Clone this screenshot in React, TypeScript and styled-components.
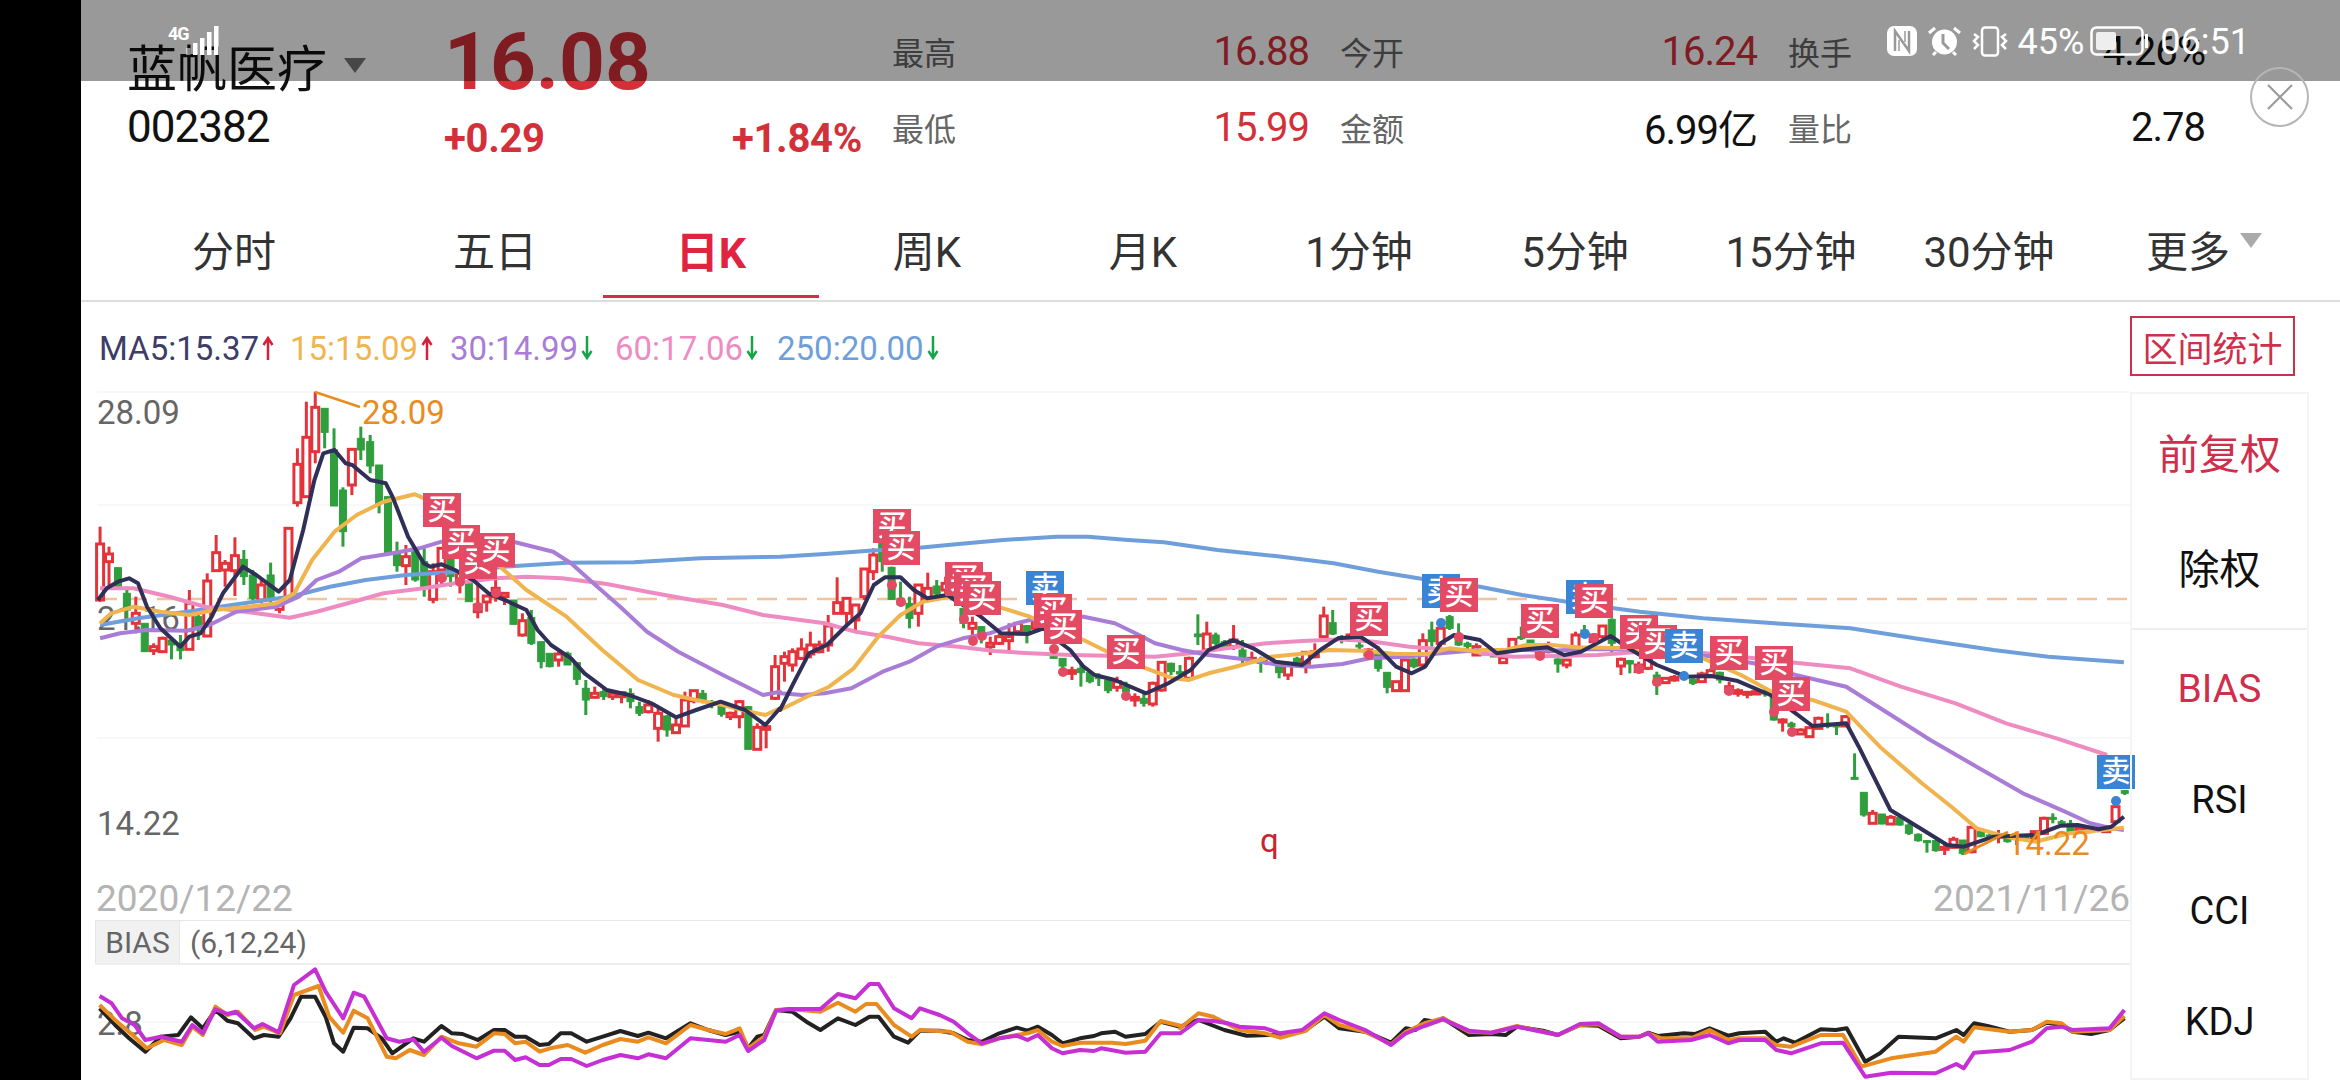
import React from "react";
import styled, { createGlobalStyle } from "styled-components";

const GlobalStyle = createGlobalStyle`
  html, body {
    margin: 0;
    padding: 0;
    background: #000;
  }
  * {
    box-sizing: border-box;
  }
`;

const FONT = `Roboto, "Noto Sans CJK SC", sans-serif`;
const RED = "#d3303a";
const BRAND = "#cf2f4b";
const BUY = "#e34b64";
const SELL = "#3a84d6";

// The chart data was read off three crops of the picture, so every trace is
// kept in crop units and mapped to page pixels here.
type Crop = { ox: number; oy: number; sx: number };
const LEFT: Crop = { ox: 80, oy: 380, sx: 2.24 };
const MID: Crop = { ox: 780, oy: 480, sx: 2.24 };
const RIGHT: Crop = { ox: 1480, oy: 560, sx: 2.376 };
const SUB_L: Crop = { ox: 80, oy: 860, sx: 1.425 };
const SUB_R: Crop = { ox: 1180, oy: 860, sx: 1.35 };

const mapX = (c: Crop, x: number) => c.ox + x / c.sx;
const mapY = (c: Crop, y: number) => c.oy + y / 3;

const trace = (...parts: [Crop, string][]) =>
  parts
    .map(([c, raw]) =>
      raw
        .trim()
        .split(/\s+/)
        .map((p) => {
          const [x, y] = p.split(",").map(Number);
          return `${mapX(c, x).toFixed(1)},${mapY(c, y).toFixed(1)}`;
        })
        .join(" ")
    )
    .join(" ");

const MA_LINES = [
  {
    color: "#6e9fdb",
    points: trace(
      [LEFT, "45,735 130,715 240,695 340,675 470,650 560,620 640,600 730,585 850,575 950,560 1090,548 1240,547 1390,535 1568,530"],
      [MID, "0,230 100,222 200,212 300,205 400,192 500,180 620,170 690,170 780,180 860,187 980,210 1110,228 1240,250 1340,275 1440,297 1568,320"],
      [RIGHT, "0,80 100,105 230,130 380,155 530,175 700,190 880,205 1060,240 1220,270 1350,290 1530,307"]
    ),
  },
  {
    color: "#ee8cc2",
    points: trace(
      [LEFT, "45,625 120,625 200,650 280,680 370,695 470,713 530,695 600,670 680,640 770,625 840,610 930,595 1000,590 1080,595 1180,612 1270,635 1350,655 1440,675 1530,705 1568,712"],
      [MID, "0,412 100,430 170,455 240,470 310,490 400,500 480,513 560,520 650,525 760,528 840,530 920,520 1000,505 1090,490 1170,483 1260,478 1330,485 1410,500 1500,510 1568,515"],
      [RIGHT, "0,280 80,290 180,288 280,285 380,275 500,275 620,290 760,310 880,325 1000,380 1130,430 1250,490 1370,535 1490,585"]
    ),
  },
  {
    color: "#a97dd6",
    points: trace(
      [LEFT, "45,775 90,760 150,750 240,752 290,735 350,695 440,680 490,650 530,600 580,575 630,535 700,520 760,505 810,485 975,487 1060,515 1100,550 1150,610 1210,680 1270,755 1340,815 1440,885 1530,945 1568,935"],
      [MID, "0,640 50,645 100,640 160,625 230,575 290,545 350,500 410,475 470,460 530,430 590,410 680,410 750,430 800,462 840,490 900,510 960,525 1040,538 1120,555 1190,560 1260,552 1320,535 1400,530 1480,520 1568,510"],
      [RIGHT, "0,270 100,270 170,272 240,268 340,268 450,280 560,290 650,310 750,345 870,380 970,460 1070,540 1180,620 1290,700 1390,755 1450,790 1500,805 1530,810"]
    ),
  },
  {
    color: "#f0b44e",
    points: trace(
      [LEFT, "45,730 70,700 120,680 180,695 245,705 300,690 380,680 440,670 480,640 520,540 570,455 620,405 680,365 750,343 780,360 860,460 945,565 1000,630 1090,710 1170,810 1250,900 1330,945 1380,960 1440,975 1500,995 1535,1005 1568,985"],
      [MID, "0,690 60,650 110,620 165,565 220,470 270,405 320,365 380,350 440,360 500,385 560,410 620,450 680,480 740,520 820,565 880,595 915,600 960,580 1020,560 1100,530 1180,520 1230,510 1300,512 1380,522 1450,522 1500,505 1568,515"],
      [RIGHT, "0,270 60,270 110,255 170,255 230,262 350,265 430,280 530,295 620,345 700,400 790,420 870,455 950,560 1050,670 1120,740 1180,805 1250,830 1320,845 1400,820 1480,810 1530,803"]
    ),
  },
  {
    color: "#2f2f57",
    points: trace(
      [LEFT, "40,660 60,625 85,605 110,595 130,610 150,680 180,745 225,800 245,770 270,760 295,710 320,640 365,560 395,585 445,635 470,600 500,450 525,300 545,220 570,210 595,250 610,255 650,300 685,310 700,350 735,470 770,550 785,560 810,553 840,570 880,600 915,640 960,665 1000,690 1025,750 1055,795 1100,835 1130,880 1180,930 1230,945 1280,970 1335,1012 1380,990 1435,965 1490,990 1535,1035 1568,985"],
      [MID, "0,690 30,610 65,520 105,495 150,435 180,400 210,315 235,292 270,292 300,330 330,355 375,345 410,375 450,410 495,460 555,462 590,445 620,480 650,510 680,560 705,585 750,600 820,640 870,610 920,570 960,510 1015,480 1060,505 1110,545 1170,555 1210,510 1250,475 1300,470 1340,505 1380,560 1415,580 1445,560 1480,490 1510,465 1568,480"],
      [RIGHT, "0,240 40,280 110,268 160,262 200,285 240,275 310,228 360,270 420,315 490,350 550,348 610,362 690,405 750,460 790,498 870,490 900,560 975,750 1040,800 1110,855 1150,860 1220,830 1320,825 1380,797 1420,795 1470,808 1500,800 1530,770"]
    ),
  },
];

const BIAS_LINES = [
  {
    color: "#222222",
    points: trace(
      [SUB_L, "28,445 50,495 70,535 93,575 115,530 140,525 158,472 175,505 193,450 210,482 225,490 248,535 262,525 283,530 300,475 315,410 335,410 350,470 362,550 375,575 390,503 410,505 430,535 445,580 475,535 490,545 515,498 530,520 545,522 567,540 590,510 605,510 620,530 635,530 655,555 668,552 685,520 700,520 722,545 745,530 770,513 795,528 810,518 835,535 870,490 895,510 920,525 940,515 952,565 965,530 975,525 992,450 1015,455 1035,485 1055,510 1080,475 1105,495 1125,470 1138,470 1160,530 1180,548 1197,512 1225,512 1245,520 1265,540 1285,545 1310,520 1335,503 1350,512 1365,500 1385,525 1400,550 1425,535 1445,528 1455,520 1475,515 1490,530 1518,522 1540,485 1568,500"],
      [SUB_R, "0,500 25,480 60,510 90,527 120,525 135,525 170,510 195,470 215,505 250,515 285,548 305,505 318,510 330,480 345,485 355,475 390,525 420,522 440,525 455,500 490,512 510,525 540,495 565,497 595,535 620,530 632,518 645,528 680,520 695,522 715,505 740,527 755,520 790,515 805,545 815,535 830,548 865,508 885,510 900,505 925,605 945,580 970,530 1020,535 1048,510 1058,525 1072,490 1090,498 1120,515 1150,510 1170,488 1190,495 1205,515 1230,522 1255,510 1275,475"]
    ),
  },
  {
    color: "#e98b1f",
    points: trace(
      [SUB_L, "28,435 50,480 75,525 95,565 120,540 145,555 160,500 175,525 193,440 210,465 225,455 250,510 262,500 285,520 305,405 340,378 355,470 375,518 390,452 410,475 437,590 450,595 470,570 490,585 515,530 540,550 565,560 590,520 605,522 620,550 635,545 655,575 670,565 695,555 720,578 745,555 770,537 795,545 810,532 835,550 870,495 895,510 920,522 940,505 952,565 975,530 992,450 1010,447 1055,455 1080,428 1105,455 1120,432 1135,432 1160,495 1185,530 1197,510 1240,515 1265,545 1285,553 1310,535 1335,525 1350,520 1365,510 1385,545 1400,558 1425,548 1470,548 1490,552 1518,542 1540,483 1568,497"],
      [SUB_R, "0,505 25,460 45,470 80,510 115,520 135,533 170,512 195,465 215,495 250,515 285,553 305,515 330,490 355,475 390,515 420,518 455,498 510,525 540,495 565,493 595,530 620,530 632,520 650,535 690,535 715,510 740,540 755,535 790,535 805,555 825,560 865,525 895,525 920,620 960,595 1020,575 1048,530 1058,545 1072,502 1120,515 1150,510 1170,485 1190,490 1205,515 1255,510 1275,468"]
    ),
  },
  {
    color: "#c52fd3",
    points: trace(
      [SUB_L, "28,408 45,430 60,475 78,495 93,540 115,530 145,545 160,495 175,520 193,448 210,462 222,455 248,505 260,492 283,517 305,375 335,328 350,395 375,475 390,398 405,410 437,535 455,545 475,538 490,575 515,533 530,558 565,595 590,572 605,572 620,600 635,592 655,615 668,615 685,597 700,597 722,618 745,600 770,585 795,595 810,583 835,595 870,535 895,540 920,545 940,525 952,573 975,540 992,452 1010,447 1055,447 1080,402 1105,415 1125,372 1138,372 1160,445 1185,475 1197,445 1225,465 1245,485 1265,520 1285,550 1310,535 1335,527 1350,540 1365,525 1385,565 1400,580 1425,570 1445,573 1455,565 1475,572 1490,578 1518,575 1540,520 1568,520"],
      [SUB_R, "0,520 25,480 45,483 65,490 80,500 115,505 135,520 165,510 195,460 215,480 250,510 285,555 305,520 330,498 355,478 390,512 420,518 455,500 510,525 540,492 565,490 595,530 620,530 632,520 645,545 690,540 715,525 740,550 755,540 790,540 805,570 825,580 865,550 895,548 925,650 960,638 1020,640 1048,612 1058,625 1072,578 1120,570 1150,545 1170,505 1190,500 1205,510 1255,505 1275,450"]
    ),
  },
];

// x, high, body top, body bottom, low, r/g
const CANDLES_LEFT = `
45 440 492 660 665 r|65 500 522 545 620 r|85 563 563 620 620 g|105 620 640 690 720 g|125 650 700 730 760 r|145 730 730 815 815 g
165 790 800 812 825 r|185 770 775 815 815 r|205 780 780 795 838 g|225 765 795 812 838 g|245 630 670 808 808 r|265 700 710 745 780 g
285 580 603 768 768 r|305 465 518 572 575 r|325 540 550 570 620 r|347 472 527 572 648 r|367 510 538 590 615 g|387 570 585 655 660 g
406 600 615 660 670 r|427 548 585 660 670 g|447 650 672 688 700 r|467 445 445 650 650 r|487 205 253 368 380 r|507 65 172 350 350 r
527 35 82 215 250 r|548 85 85 157 205 g|569 145 210 378 378 g|589 322 330 455 500 g|609 205 208 315 345 r|629 140 175 210 240 g
650 165 185 258 280 g|670 255 255 370 400 g|690 350 350 520 520 g|710 485 520 557 575 g|730 495 530 557 615 r|751 510 510 600 605 g
771 505 545 622 650 g|791 550 575 658 670 r|810 505 505 570 620 r|830 530 530 590 620 g|851 580 580 600 640 r|871 610 610 665 665 g
891 615 675 695 715 r|911 645 648 666 695 r|931 590 625 650 665 r|951 640 640 650 675 r|971 660 660 733 733 g|991 700 722 765 770 r
1011 690 712 790 795 g|1033 785 785 845 865 g|1052 820 820 860 862 g|1072 815 822 840 860 r|1092 815 820 855 855 g|1113 848 848 898 915 g
1133 900 925 960 1005 g|1153 920 940 952 955 r|1173 925 935 950 960 g|1193 930 940 950 960 r|1213 935 938 950 970 r|1233 925 940 965 985 g
1253 965 980 1000 1008 g|1273 960 975 995 1000 r|1295 985 1000 1045 1085 r|1315 1005 1008 1050 1070 g|1335 1015 1035 1058 1060 r|1355 935 960 1038 1040 r
1375 930 932 962 970 r|1395 930 940 960 970 g|1415 960 965 975 985 g|1437 970 975 1003 1010 g|1457 995 1000 1010 1020 r|1477 960 965 1010 1045 r
1497 980 980 1108 1108 g|1517 1030 1042 1108 1108 r|1537 1030 1040 1048 1105 r|1557 825 860 955 960 r`;

const CANDLES_MID = `
10 515 530 550 605 r|28 505 515 555 575 r|48 475 507 535 540 r|68 455 495 522 535 r|88 482 495 515 520 r|108 405 438 495 515 r
128 292 368 400 400 r|149 355 355 400 440 r|169 375 375 420 450 r|189 267 267 350 360 r|209 205 225 275 300 r|229 190 190 245 275 g
250 260 262 358 360 g|270 305 355 375 380 g|290 350 370 415 445 g|310 312 315 400 440 r|331 278 325 355 358 r|351 300 318 342 345 g
371 290 310 330 340 r|391 320 320 360 365 g|411 385 385 430 445 g|431 410 430 445 480 r|451 438 440 470 490 g|471 470 490 500 525 r
491 460 470 490 495 r|513 430 470 482 510 r|533 425 430 455 460 r|553 435 437 462 490 g|573 410 415 445 450 r|593 410 410 440 445 r
613 500 525 535 535 g|633 535 535 558 585 g|654 560 572 580 600 r|674 550 565 578 620 g|694 575 578 605 610 g|714 580 590 595 618 g
735 595 600 632 640 g|755 590 605 622 635 r|775 605 618 635 640 g|795 640 652 660 680 r|815 640 655 670 680 g|835 605 610 672 680 r
855 545 547 630 635 r|876 548 550 575 585 g|896 555 575 582 600 g|916 530 535 595 600 r|936 403 462 470 495 g|956 425 462 510 515 r
976 458 465 490 495 g|996 480 485 500 505 g|1016 435 480 500 510 r|1036 480 510 535 555 g|1057 515 535 545 550 r|1077 530 540 550 578 g
1097 530 535 550 555 r|1118 545 550 578 595 g|1138 545 550 585 600 r|1158 530 535 555 560 g|1178 515 517 550 580 r|1198 490 515 530 535 r
1218 380 408 470 475 r|1238 390 428 462 465 g|1258 465 470 475 490 g|1278 460 465 480 485 r|1298 485 495 498 510 g|1318 505 510 525 530 r
1340 500 520 565 575 g|1360 577 577 622 640 g|1380 605 605 632 632 r|1400 540 540 632 632 r|1420 535 537 560 565 g|1440 460 482 555 560 r
1460 425 450 485 500 g|1480 440 445 490 500 r|1500 405 410 445 450 g|1520 430 465 495 498 g|1540 485 490 500 510 g|1560 490 500 525 525 r`;

const CANDLES_RIGHT = `
10 265 268 285 285 g|33 275 285 290 290 g|55 290 293 308 310 r|77 235 238 270 272 r|98 200 230 235 240 g|120 240 240 260 262 g
142 270 275 290 295 r|163 245 268 275 280 r|185 295 297 312 338 g|206 298 300 315 325 r|227 215 225 265 270 r|248 195 210 230 235 g
270 220 225 245 248 r|291 195 198 230 235 r|313 175 178 250 280 g|335 293 298 318 345 r|356 300 302 312 340 g|377 305 315 335 340 r
399 290 297 325 330 r|420 335 345 375 405 g|441 352 355 368 372 r|462 345 352 360 365 r|485 340 345 355 358 g|506 355 358 370 375 g
527 335 342 365 368 r|548 325 332 350 352 r|570 335 337 360 370 g|592 365 380 395 405 r|613 385 392 400 410 r|635 395 397 402 415 r
656 390 395 402 405 r|677 385 395 402 410 g|698 410 410 480 482 g|719 475 480 485 515 r|740 485 490 500 505 g|762 505 510 522 525 r
783 500 503 530 532 r|804 470 475 505 508 r|826 460 490 500 505 g|847 490 495 500 525 g|868 465 470 498 500 r|890 580 652 655 658 g
912 697 697 765 770 g|933 750 760 790 792 r|955 762 762 792 793 g|976 765 772 792 793 r|997 770 772 795 797 g|1019 790 795 820 825 g
1041 820 823 842 845 g|1062 840 842 845 878 g|1083 840 842 872 875 g|1104 855 862 868 885 r|1125 830 838 862 865 r|1147 840 840 880 885 g
1168 797 802 875 880 r|1190 812 815 830 832 g|1211 820 825 835 838 g|1232 810 825 830 850 r|1253 830 832 845 848 g|1275 815 830 835 855 r
1296 825 826 835 838 g|1318 815 815 835 838 r|1340 770 775 820 825 r|1361 760 772 775 790 g|1382 780 785 790 800 g|1403 780 790 815 820 g
1424 800 805 815 820 r|1445 800 805 815 820 r|1466 800 803 812 815 g|1488 805 808 815 818 r|1510 735 740 785 790 r|1532 690 692 700 705 g`;

const parseCandles = (c: Crop, raw: string) =>
  raw
    .trim()
    .split(/[|\n]/)
    .map((row) => {
      const [x, hi, top, bot, lo, kind] = row.trim().split(" ");
      return {
        x: mapX(c, +x),
        hi: mapY(c, +hi),
        top: mapY(c, +top),
        bot: mapY(c, +bot),
        lo: mapY(c, +lo),
        up: kind === "r",
      };
    });

const CANDLES = [
  ...parseCandles(LEFT, CANDLES_LEFT),
  ...parseCandles(MID, CANDLES_MID),
  ...parseCandles(RIGHT, CANDLES_RIGHT),
];

const SIGNALS: [number, number, "买" | "卖"][] = [
  [423, 493, "买"], [442, 525, "买"], [459, 545, "买"], [477, 533, "买"],
  [873, 509, "买"], [882, 531, "买"], [945, 562, "买"], [954, 572, "买"], [963, 581, "买"],
  [1026, 571, "卖"], [1034, 594, "买"], [1044, 610, "买"], [1107, 635, "买"], [1350, 602, "买"],
  [1422, 574, "卖"], [1440, 578, "买"], [1521, 604, "买"], [1566, 580, "卖"], [1575, 584, "买"],
  [1620, 615, "买"], [1639, 625, "买"], [1665, 629, "卖"], [1710, 636, "买"], [1755, 646, "买"],
  [1772, 677, "买"], [2097, 755, "卖"],
];

const DOTS: [number, number, string][] = [
  [442, 578, BUY], [460, 582, BUY], [478, 607, BUY], [496, 593, BUY],
  [892, 585, BUY], [901, 602, BUY], [964, 619, BUY], [973, 641, BUY], [982, 636, BUY],
  [1054, 649, BUY], [1063, 672, BUY], [1126, 696, BUY], [1369, 655, BUY], [1441, 623, SELL],
  [1459, 637, BUY], [1540, 656, BUY], [1585, 634, SELL], [1594, 638, BUY], [1639, 669, BUY],
  [1657, 682, BUY], [1684, 676, SELL], [1729, 691, BUY], [1774, 712, BUY], [1792, 732, BUY],
  [2116, 801, SELL],
];

const Page = styled.div`
  position: relative;
  display: flex;
  width: 2340px;
  height: 1080px;
  overflow: hidden;
  background: #000;
  font-family: ${FONT};
`;

const Main = styled.div`
  flex: 1;
  display: flex;
  flex-direction: column;
  margin-left: 81px;
  background: #fff;
`;

const StatusBar = styled.div`
  position: absolute;
  top: 0;
  left: 81px;
  right: 0;
  height: 81px;
  display: flex;
  align-items: flex-start;
  justify-content: space-between;
  padding: 26px 90px 0 87px;
  background: rgba(0, 0, 0, 0.4);
  color: #fff;
  z-index: 5;
`;

const StatusGroup = styled.div`
  display: flex;
  align-items: flex-start;
`;

const NetworkLabel = styled.span`
  font-size: 18px;
  line-height: 16px;
  font-weight: 700;
  width: 18px;
  letter-spacing: -1px;
`;

const StatusText = styled.span<{ $gap: number }>`
  font-size: 36px;
  line-height: 32px;
  margin-left: ${(p) => p.$gap}px;
`;

const StatusIcon = styled.svg<{ $gap: number }>`
  display: block;
  flex: none;
  margin-left: ${(p) => p.$gap}px;
`;

const Header = styled.div`
  display: flex;
  height: 198px;
  padding-left: 46px;
  color: #111;
`;

const NameColumn = styled.div`
  width: 314px;
  padding-top: 35px;
`;

const StockName = styled.div`
  display: flex;
  align-items: center;
  height: 60px;
  font-size: 50px;
  font-weight: 400;
`;

const Caret = styled.span<{ $w: number; $h: number; $color: string; $gap: number }>`
  display: inline-block;
  margin-left: ${(p) => p.$gap}px;
  border-left: ${(p) => p.$w}px solid transparent;
  border-right: ${(p) => p.$w}px solid transparent;
  border-top: ${(p) => p.$h}px solid ${(p) => p.$color};
`;

const StockCode = styled.div`
  margin-top: 7px;
  font-size: 44px;
  line-height: 50px;
  letter-spacing: -1px;
`;

const PriceColumn = styled.div`
  width: 421px;
  padding: 31px 0 0 3px;
  color: ${RED};
`;

const Price = styled.div`
  font-size: 80px;
  line-height: 62px;
  font-weight: 700;
`;

const ChangeRow = styled.div`
  display: flex;
  justify-content: space-between;
  margin-top: 24px;
  font-size: 40px;
  line-height: 44px;
  font-weight: 700;
  letter-spacing: -0.3px;
`;

const StatsGrid = styled.div`
  display: grid;
  grid-template-columns: repeat(3, 417px);
  grid-auto-rows: 76px;
  column-gap: 31px;
  margin-left: 30px;
  padding-top: 13px;
`;

const Stat = styled.div`
  display: flex;
  align-items: center;
  justify-content: space-between;
`;

const StatLabel = styled.span`
  font-size: 32px;
  color: #666;
`;

const StatValue = styled.span<{ $red?: boolean }>`
  font-size: 40px;
  letter-spacing: -1px;
  color: ${(p) => (p.$red ? RED : "#111")};
`;

const CloseButton = styled.div`
  position: absolute;
  top: 67px;
  left: 2250px;
  display: flex;
  align-items: center;
  justify-content: center;
  width: 59px;
  height: 60px;
  border: 2px solid #b5b5b5;
  border-radius: 50%;
  z-index: 6;
`;

const TabBar = styled.div`
  display: grid;
  grid-template-columns: 306px repeat(7, 216px) 180px 250px;
  height: 104px;
  padding-bottom: 2px;
  border-bottom: 2px solid #ddd;
`;

const Tab = styled.div<{ $active?: boolean }>`
  display: flex;
  align-items: center;
  justify-content: center;
  height: 100px;
  padding-top: 4px;
  border-bottom: 3px solid ${(p) => (p.$active ? BRAND : "transparent")};
  font-size: ${(p) => (p.$active ? 43 : 42)}px;
  font-weight: ${(p) => (p.$active ? 700 : 400)};
  color: ${(p) => (p.$active ? "#e0243f" : "#333")};
`;

const TabCaret = styled(Caret)`
  margin-bottom: 16px;
`;

const Body = styled.div`
  flex: 1;
  display: flex;
  min-height: 0;
`;

const ChartColumn = styled.div`
  display: flex;
  flex-direction: column;
  width: 2049px;
`;

const Legend = styled.div`
  display: flex;
  align-items: center;
  height: 90px;
  padding: 2px 0 0 18px;
  font-size: 33px;
`;

const LegendItem = styled.span<{ $color: string; $width: number }>`
  display: flex;
  align-items: center;
  width: ${(p) => p.$width}px;
  color: ${(p) => p.$color};
  white-space: nowrap;
`;

const LegendArrow = styled.svg`
  display: block;
  flex: none;
  margin-left: 3px;
`;

const PlotSvg = styled.svg`
  display: block;
  flex: none;
  overflow: visible;
`;

const AxisLabel = styled.text<{ $color?: string }>`
  font-family: ${FONT};
  font-size: 33px;
  fill: ${(p) => p.$color || "#666"};
`;

const SignalText = styled.text`
  font-family: "Noto Sans CJK SC", sans-serif;
  font-size: 29px;
  font-weight: 500;
  fill: #fff;
  text-anchor: middle;
`;

const DateRow = styled.div`
  display: flex;
  align-items: center;
  justify-content: space-between;
  height: 45px;
  padding: 2px 0 0 15px;
  font-size: 37px;
  color: #b4b4b4;
`;

const BiasHeader = styled.div`
  display: flex;
  align-items: stretch;
  height: 45px;
  margin-left: 14px;
  border-top: 1px solid #e6e6e6;
  border-bottom: 2px solid #eee;
  color: #666;
  font-size: 30px;
`;

const BiasTag = styled.div`
  display: flex;
  align-items: center;
  justify-content: center;
  width: 85px;
  background: #f1f1f1;
  border-left: 1px solid #e6e6e6;
  border-right: 1px solid #e6e6e6;
`;

const BiasParams = styled.div`
  display: flex;
  align-items: center;
  margin-left: 10px;
`;

const Aside = styled.div`
  width: 181px;
  padding-top: 14px;
`;

const IntervalButton = styled.div`
  display: flex;
  align-items: center;
  justify-content: center;
  width: 165px;
  height: 60px;
  border: 2px solid ${BRAND};
  color: ${BRAND};
  font-size: 35px;
`;

const Panel = styled.div`
  display: flex;
  flex-direction: column;
  width: 179px;
  height: 688px;
  margin-top: 16px;
  border: 2px solid #f4f4f4;
`;

const PanelGroup = styled.div<{ $divided?: boolean }>`
  display: flex;
  flex-direction: column;
  flex: ${(p) => (p.$divided ? "none" : 1)};
  height: ${(p) => (p.$divided ? "236px" : "auto")};
  padding: ${(p) => (p.$divided ? "0 0 5px" : "3px 0 0")};
  border-bottom: ${(p) => (p.$divided ? "2px solid #eee" : "none")};
`;

const PanelItem = styled.div<{ $active?: boolean; $size: number }>`
  flex: 1;
  display: flex;
  align-items: center;
  justify-content: center;
  font-size: ${(p) => p.$size}px;
  color: ${(p) => (p.$active ? BRAND : "#111")};
`;

const TABS = ["分时", "五日", "日K", "周K", "月K", "1分钟", "5分钟", "15分钟", "30分钟"];

const STATS: { label: string; value: string; red?: boolean }[] = [
  { label: "最高", value: "16.88", red: true },
  { label: "今开", value: "16.24", red: true },
  { label: "换手", value: "4.26%" },
  { label: "最低", value: "15.99", red: true },
  { label: "金额", value: "6.99亿" },
  { label: "量比", value: "2.78" },
];

const LEGEND = [
  { text: "MA5:15.37", color: "#3d3d68", up: true, width: 191 },
  { text: "15:15.09", color: "#efb54e", up: true, width: 160 },
  { text: "30:14.99", color: "#a97dd6", up: false, width: 165 },
  { text: "60:17.06", color: "#ee8cc2", up: false, width: 162 },
  { text: "250:20.00", color: "#6e9fdb", up: false, width: 170 },
];

const GRID_ROWS = [392, 505, 623, 738];
const BARS = [22, 17, 12, 6, 0];

const App = () => {
  return (
    <>
      <GlobalStyle />
      <Page>
        <StatusBar>
          <StatusGroup>
            <NetworkLabel>4G</NetworkLabel>
            <svg width="33" height="29" viewBox="0 0 33 29">
              {BARS.map((top, i) => (
                <rect key={i} x={i * 7} y={top} width="4.5" height={29 - top} fill="#fff" opacity={i === 0 ? 0.5 : 1} />
              ))}
            </svg>
          </StatusGroup>
          <StatusGroup>
            <StatusIcon $gap={0} width="30" height="30" viewBox="0 0 30 30">
              <rect width="30" height="30" rx="7" fill="#fff" />
              <path d="M8 25V5l14 20V5" fill="none" stroke="#999" strokeWidth="2.5" />
              <path d="M12 25V14M18 5v11" fill="none" stroke="#999" strokeWidth="1.5" />
            </StatusIcon>
            <StatusIcon $gap={10} width="35" height="31" viewBox="0 0 35 31">
              <circle cx="17.5" cy="16" r="12.5" fill="#fff" />
              <path d="M16 8v9l6 6" fill="none" stroke="#999" strokeWidth="3" />
              <path d="M2 7l6-5M33 7l-6-5M6 29l3-3M29 29l-3-3" stroke="#fff" strokeWidth="3" fill="none" />
            </StatusIcon>
            <StatusIcon $gap={9} width="38" height="31" viewBox="0 0 38 31">
              <rect x="11" y="1.5" width="16" height="28" rx="3" fill="none" stroke="#fff" strokeWidth="2.5" />
              <path d="M3 8l4 3-4 4 4 4-4 4M35 8l-4 3 4 4-4 4 4 4" fill="none" stroke="#fff" strokeWidth="2.5" />
            </StatusIcon>
            <StatusText $gap={9}>45%</StatusText>
            <StatusIcon $gap={6} width="58" height="30" viewBox="0 0 58 30">
              <rect x="1.5" y="1.5" width="51" height="27" rx="5" fill="none" stroke="#fff" strokeWidth="2.5" />
              <rect x="6" y="6" width="20" height="18" rx="2" fill="#eee" />
              <rect x="55" y="8" width="3" height="14" fill="#fff" />
            </StatusIcon>
            <StatusText $gap={12}>06:51</StatusText>
          </StatusGroup>
        </StatusBar>

        <CloseButton>
          <svg width="30" height="30" viewBox="0 0 30 30">
            <path d="M3 3l24 24M27 3L3 27" stroke="#999" strokeWidth="2" fill="none" />
          </svg>
        </CloseButton>

        <Main>
          <Header>
            <NameColumn>
              <StockName>
                蓝帆医疗
                <Caret $w={11} $h={15} $color="#777" $gap={17} />
              </StockName>
              <StockCode>002382</StockCode>
            </NameColumn>
            <PriceColumn>
              <Price>16.08</Price>
              <ChangeRow>
                <span>+0.29</span>
                <span>+1.84%</span>
              </ChangeRow>
            </PriceColumn>
            <StatsGrid>
              {STATS.map((s) => (
                <Stat key={s.label}>
                  <StatLabel>{s.label}</StatLabel>
                  <StatValue $red={s.red}>{s.value}</StatValue>
                </Stat>
              ))}
            </StatsGrid>
          </Header>

          <TabBar>
            {TABS.map((t) => (
              <Tab key={t} $active={t === "日K"}>
                {t}
              </Tab>
            ))}
            <Tab>
              更多
              <TabCaret $w={11} $h={15} $color="#aaa" $gap={10} />
            </Tab>
          </TabBar>

          <Body>
            <ChartColumn>
              <Legend>
                {LEGEND.map((l) => (
                  <LegendItem key={l.text} $color={l.color} $width={l.width}>
                    {l.text}
                    <LegendArrow width="12" height="24" viewBox="0 0 12 24">
                      <path
                        d={l.up ? "M6 24V4M1.5 9L6 2l4.5 7" : "M6 0v20M1.5 15L6 22l4.5-7"}
                        fill="none"
                        stroke={l.up ? "#d8203c" : "#16a34a"}
                        strokeWidth="2.5"
                      />
                    </LegendArrow>
                  </LegendItem>
                ))}
              </Legend>

              <PlotSvg width="2049" height="483" viewBox="81 392 2049 483">
                {GRID_ROWS.map((y) => (
                  <line key={y} x1="97" x2="2130" y1={y} y2={y} stroke="#f8f8f8" strokeWidth="2" />
                ))}
                <AxisLabel x="97" y="424">28.09</AxisLabel>
                <AxisLabel x="97" y="630">21.16</AxisLabel>
                <AxisLabel x="97" y="835">14.22</AxisLabel>
                <line x1="97" x2="2130" y1="599" y2="599" stroke="#f3c49b" strokeWidth="2.5" strokeDasharray="20 10" />

                {CANDLES.map((c, i) => {
                  const color = c.up ? "#e4333a" : "#2f9e3d";
                  return (
                    <g key={i}>
                      <line x1={c.x} x2={c.x} y1={c.hi} y2={c.lo} stroke={color} strokeWidth="3" />
                      <rect
                        x={c.x - 3.5}
                        y={c.top}
                        width="7"
                        height={Math.max(c.bot - c.top, 2)}
                        fill={c.up ? "#fff" : color}
                        stroke={color}
                        strokeWidth={c.up ? 3 : 1}
                      />
                    </g>
                  );
                })}

                {MA_LINES.map((l) => (
                  <polyline key={l.color} points={l.points} fill="none" stroke={l.color} strokeWidth="4" strokeLinejoin="round" />
                ))}

                <path d="M315 392L360 407" stroke="#e98b1f" strokeWidth="2.5" fill="none" />
                <AxisLabel x="362" y="424" $color="#e98b1f">28.09</AxisLabel>
                <path d="M1964 854L2008 832" stroke="#e98b1f" strokeWidth="3" fill="none" />
                <AxisLabel x="2007" y="855" $color="#e98b1f">14.22</AxisLabel>
                <AxisLabel x="1260" y="852" $color="#c8242f">q</AxisLabel>

                {DOTS.map(([x, y, fill], i) => (
                  <circle key={i} cx={x} cy={y} r="5" fill={fill} />
                ))}
                {SIGNALS.map(([x, y, kind], i) => (
                  <g key={i}>
                    <rect x={x} y={y} width="38" height="34" fill={kind === "买" ? BUY : SELL} />
                    <SignalText x={x + 19} y={y + 27}>{kind}</SignalText>
                  </g>
                ))}
              </PlotSvg>

              <DateRow>
                <span>2020/12/22</span>
                <span>2021/11/26</span>
              </DateRow>

              <BiasHeader>
                <BiasTag>BIAS</BiasTag>
                <BiasParams>(6,12,24)</BiasParams>
              </BiasHeader>

              <PlotSvg width="2049" height="115" viewBox="81 965 2049 115">
                <line x1="97" x2="2130" y1="1022" y2="1022" stroke="#f8f8f8" strokeWidth="2" />
                <AxisLabel x="97" y="1035">2.8</AxisLabel>
                {BIAS_LINES.map((l) => (
                  <polyline key={l.color} points={l.points} fill="none" stroke={l.color} strokeWidth="4" strokeLinejoin="round" />
                ))}
              </PlotSvg>
            </ChartColumn>

            <Aside>
              <IntervalButton>区间统计</IntervalButton>
              <Panel>
                <PanelGroup $divided>
                  <PanelItem $active $size={41}>前复权</PanelItem>
                  <PanelItem $size={41}>除权</PanelItem>
                </PanelGroup>
                <PanelGroup>
                  <PanelItem $active $size={39}>BIAS</PanelItem>
                  <PanelItem $size={38}>RSI</PanelItem>
                  <PanelItem $size={38}>CCI</PanelItem>
                  <PanelItem $size={38}>KDJ</PanelItem>
                </PanelGroup>
              </Panel>
            </Aside>
          </Body>
        </Main>
      </Page>
    </>
  );
};

export default App;
